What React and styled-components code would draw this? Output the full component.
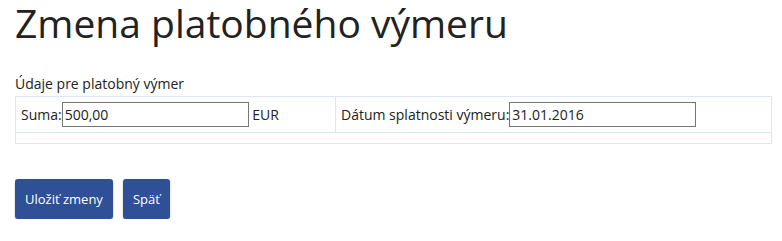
import React from "react";
import styled, { createGlobalStyle } from "styled-components";

const Global = createGlobalStyle`
  html, body { margin: 0; padding: 0; background: #fff; }
  body { font-family: "Open Sans", "Noto Sans", sans-serif; color: #222; font-size: 14px; }
`;

const Page = styled.div`
  padding: 3px 10px 0 15px;
`;

const Title = styled.h1`
  margin: 0;
  font-size: 39px;
  line-height: 40px;
  font-weight: 400;
  color: #222;
`;

const Section = styled.section`
  margin-top: 31px;
`;

const Caption = styled.div`
  font-size: 14px;
  line-height: 19px;
  margin-bottom: 3px;
`;

const Table = styled.table`
  width: 757px;
  border-collapse: collapse;
  border: 1px solid #dde6f7;
`;

const Cell = styled.td`
  border: 1px solid #dde6f7;
  padding: 5px;
  height: ${(p) => (p.$empty ? "0" : "25px")};
  width: ${(p) => p.$w || "auto"};
  font-size: 14px;
  line-height: 19px;
  white-space: nowrap;
  vertical-align: middle;
`;

const Input = styled.input`
  box-sizing: border-box;
  width: 187px;
  height: 25px;
  border: 1px solid #767676;
  padding: 1px 2px;
  font-family: "Open Sans", "Noto Sans", sans-serif;
  font-size: 14px;
  color: #222;
  vertical-align: baseline;
  outline: none;
`;

const Actions = styled.div`
  display: flex;
  gap: 10px;
  margin-top: 35px;
`;

const Button = styled.button`
  height: 40px;
  padding: 0 10px;
  border: none;
  border-radius: 3px;
  background: #2f5096;
  color: #fff;
  font-family: "Open Sans", "Noto Sans", sans-serif;
  font-size: 13px;
  box-shadow: 0 1px 2px rgba(0, 0, 0, 0.3);
  cursor: pointer;
`;

export default function App() {
  return (
    <Page>
      <Global />
      <Title>Zmena platobného výmeru</Title>
      <Section>
        <Caption>Údaje pre platobný výmer</Caption>
        <Table>
          <tbody>
            <tr>
              <Cell $w="309px">
                Suma:<Input defaultValue="500,00" /> EUR
              </Cell>
              <Cell>
                Dátum splatnosti výmeru:<Input defaultValue="31.01.2016" />
              </Cell>
            </tr>
            <tr>
              <Cell $empty colSpan={2} />
            </tr>
          </tbody>
        </Table>
      </Section>
      <Actions>
        <Button>Uložiť zmeny</Button>
        <Button>Späť</Button>
      </Actions>
    </Page>
  );
}
